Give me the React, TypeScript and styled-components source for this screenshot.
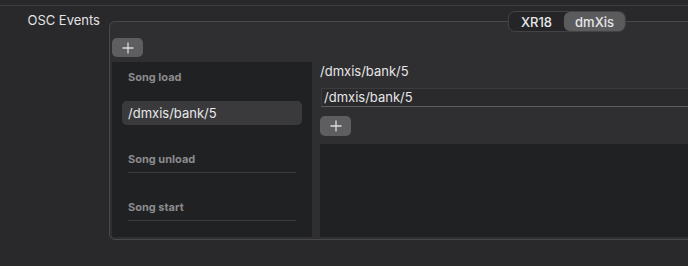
import React from "react";
import styled, { createGlobalStyle } from "styled-components";

const Global = createGlobalStyle`
  html, body { margin: 0; padding: 0; background: #29292b; overflow: hidden; }
  body { font-family: Inter, "Noto Sans", "Liberation Sans", sans-serif; color: #e4e4e6; -webkit-font-smoothing: antialiased; }
`;

const Page = styled.div`
  width: 100%;
  height: 266px;
  padding-top: 5px;
  box-sizing: border-box;
  overflow: hidden;
`;

const TopRule = styled.div`
  height: 1px;
  background: #3d3d3f;
`;

const SectionRow = styled.div`
  display: flex;
  gap: 9px;
`;

const SectionLabel = styled.div`
  width: 100px;
  flex: none;
  text-align: right;
  margin-top: 6px;
  font-size: 13px;
  line-height: 16px;
  color: #e2e2e4;
`;

const GroupBox = styled.div`
  position: relative;
  flex: none;
  margin-top: 15px;
  width: 916px;
  border: 1px solid #49494b;
  border-radius: 6px;
  background: #2f2f31;
  padding: 16px 0 2px 2px;
  box-sizing: border-box;
  display: flex;
  flex-direction: column;
  gap: 5px;
`;

const Segmented = styled.div`
  position: absolute;
  top: -11px;
  left: 50%;
  transform: translateX(-50%);
  display: flex;
  height: 21px;
  box-sizing: border-box;
  border: 1px solid #434345;
  border-radius: 7px;
  background: #252527;
`;

const Segment = styled.div<{ $active?: boolean }>`
  display: flex;
  align-items: center;
  justify-content: center;
  padding: 0 ${(p) => (p.$active ? "11px" : "12px")};
  min-width: ${(p) => (p.$active ? "39px" : "30px")};
  font-size: 13px;
  font-weight: 500;
  color: #e6e6e8;
  border-radius: 6px;
  background: ${(p) => (p.$active ? "#5b5b5d" : "transparent")};
`;

const PlusButton = styled.button<{ $h?: number }>`
  width: 31px;
  height: ${(p) => p.$h ?? 19}px;
  border: none;
  border-radius: 5px;
  background: #5e5e60;
  display: flex;
  align-items: center;
  justify-content: center;
  padding: 0;
  flex: none;
`;

const ContentRow = styled.div`
  display: flex;
  gap: 8px;
  height: 175px;
`;

const ListPanel = styled.div`
  width: 200px;
  flex: none;
  background: #202123;
  display: flex;
  flex-direction: column;
`;

const ListHeader = styled.div`
  height: 29px;
  line-height: 30px;
  padding-left: 16px;
  font-size: 11px;
  font-weight: 700;
  color: #8b8b8d;
`;

const ListItem = styled.div<{ $selected?: boolean }>`
  margin: 10px 10px 0;
  height: 24px;
  line-height: 24px;
  padding-left: 6px;
  border-radius: 5px;
  background: ${(p) => (p.$selected ? "#3a3a3c" : "transparent")};
  font-size: 13px;
  color: #e8e8ea;
`;

const EmptySection = styled.div`
  margin: 0 16px;
  padding-top: 27px;
  border-bottom: 1px solid #3a3a3c;
`;

const EmptyTitle = styled.div`
  font-size: 11px;
  font-weight: 700;
  line-height: 14px;
  margin-bottom: 6px;
  color: #8b8b8d;
`;

const DetailColumn = styled.div`
  flex: 1;
  display: flex;
  flex-direction: column;
  padding-right: 4px;
`;

const DetailTitle = styled.div`
  font-size: 13px;
  line-height: 18px;
  height: 18px;
  color: #e6e6e8;
`;

const AddressField = styled.div`
  margin-top: 8px;
  margin-left: 1px;
  height: 19px;
  box-sizing: border-box;
  border: 1px solid #3c3c3e;
  border-bottom-color: #5d5d5f;
  background: #2a2a2c;
  font-size: 13px;
  line-height: 17px;
  padding-left: 2px;
  color: #e6e6e8;
`;

const ButtonRow = styled.div`
  margin-top: 9px;
  display: flex;
`;

const DetailArea = styled.div`
  margin-top: 8px;
  flex: 1;
  background: #202123;
`;

const PlusIcon = () => (
  <svg width="12" height="12" viewBox="0 0 12 12">
    <path d="M6 0.5V11.5M0.5 6H11.5" stroke="#dcdcde" strokeWidth="1.3" />
  </svg>
);

export default function App() {
  return (
    <Page>
      <Global />
      <TopRule />
      <SectionRow>
        <SectionLabel>OSC Events</SectionLabel>
        <GroupBox>
          <Segmented>
            <Segment>XR18</Segment>
            <Segment $active>dmXis</Segment>
          </Segmented>
          <PlusButton>
            <PlusIcon />
          </PlusButton>
          <ContentRow>
            <ListPanel>
              <ListHeader>Song load</ListHeader>
              <ListItem $selected>/dmxis/bank/5</ListItem>
              <EmptySection>
                <EmptyTitle>Song unload</EmptyTitle>
              </EmptySection>
              <EmptySection>
                <EmptyTitle>Song start</EmptyTitle>
              </EmptySection>
            </ListPanel>
            <DetailColumn>
              <DetailTitle>/dmxis/bank/5</DetailTitle>
              <AddressField>/dmxis/bank/5</AddressField>
              <ButtonRow>
                <PlusButton $h={20}>
                  <PlusIcon />
                </PlusButton>
              </ButtonRow>
              <DetailArea />
            </DetailColumn>
          </ContentRow>
        </GroupBox>
      </SectionRow>
    </Page>
  );
}
